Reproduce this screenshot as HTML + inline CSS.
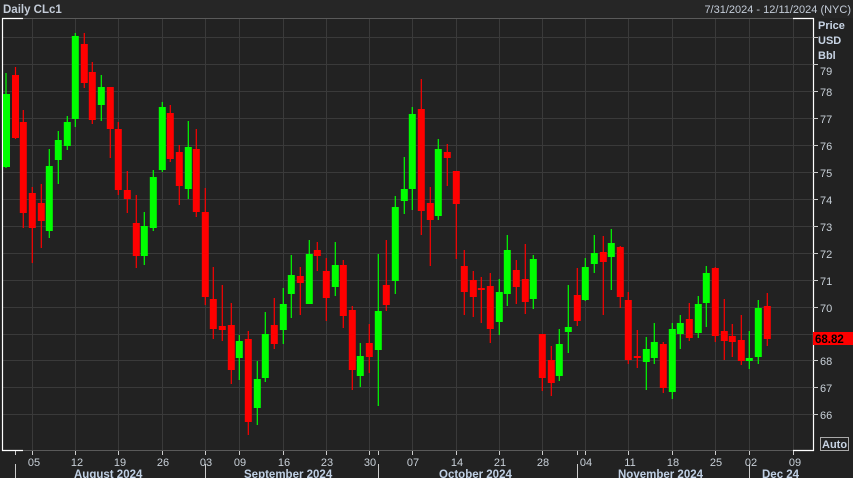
<!DOCTYPE html>
<html><head><meta charset="utf-8"><style>
html,body{margin:0;padding:0;background:#222222;}
body{width:853px;height:478px;overflow:hidden;position:relative;font-family:"Liberation Sans",Arial,sans-serif;}
svg{position:absolute;left:0;top:0;}
</style></head><body>
<svg width="853" height="478" viewBox="0 0 853 478" xmlns="http://www.w3.org/2000/svg">
<rect x="0" y="0" width="853" height="478" fill="#222222"/>
<rect x="0" y="0" width="853" height="18" fill="#262626"/>
<text x="3" y="13" font-size="11.5" font-weight="bold" fill="#c4ccd8" font-family="Liberation Sans, sans-serif">Daily CLc1</text>
<text x="851" y="13" font-size="11" fill="#c4ccd8" text-anchor="end" font-family="Liberation Sans, sans-serif">7/31/2024 - 12/11/2024 (NYC)</text>
<!-- grid -->
<g stroke="#3a3a3a" stroke-width="1">
<path d="M2 37.5H813M2 64.5H813M2 91.5H813M2 118.5H813M2 145.5H813M2 172.5H813M2 199.5H813M2 226.5H813M2 253.5H813M2 280.5H813M2 307.5H813M2 334.5H813M2 360.5H813M2 387.5H813M2 414.5H813"/>
<path d="M32.5 18V450M75.5 18V450M118.5 18V450M162.5 18V450M205.5 18V450M239.5 18V450M283.5 18V450M326.5 18V450M369.5 18V450M412.5 18V450M456.5 18V450M499.5 18V450M542.5 18V450M585.5 18V450M628.5 18V450M672.5 18V450M715.5 18V450M749.5 18V450M793.5 18V450"/>
</g>
<path d="M2 18.5H813M2 450.5H813" stroke="#5a5a5a" stroke-width="1"/>
<path d="M2.5 18V451M2 18.5H23M2 450.5H23M813.5 18V451M793 18.5H814M793 450.5H814" stroke="#ffffff" stroke-width="1.2" fill="none"/>
<!-- right axis ticks -->
<path d="M813 37.5H818M813 64.5H818M813 91.5H818M813 118.5H818M813 145.5H818M813 172.5H818M813 199.5H818M813 226.5H818M813 253.5H818M813 280.5H818M813 307.5H818M813 334.5H818M813 360.5H818M813 387.5H818M813 414.5H818" stroke="#cccccc" stroke-width="1"/>
<g font-size="11" fill="#c8d0d8" font-family="Liberation Sans, sans-serif">
<text x="818" y="29" font-weight="bold" fill="#c8d4e4">Price</text>
<text x="818" y="44" font-weight="bold" fill="#c8d4e4">USD</text>
<text x="818" y="59" font-weight="bold" fill="#c8d4e4">Bbl</text>
<text x="820" y="75">79</text><text x="820" y="96">78</text><text x="820" y="123">77</text><text x="820" y="150">76</text><text x="820" y="177">75</text><text x="820" y="204">74</text><text x="820" y="231">73</text><text x="820" y="258">72</text><text x="820" y="285">71</text><text x="820" y="312">70</text><text x="820" y="365">68</text><text x="820" y="392">67</text><text x="820" y="419">66</text>
</g>
<rect x="813" y="332" width="40" height="13" fill="#ff0000"/>
<text x="815" y="343" font-size="11.5" font-weight="bold" fill="#000" font-family="Liberation Sans, sans-serif">68.82</text>
<rect x="820.5" y="437.5" width="28" height="13" fill="none" stroke="#aaaaaa"/>
<text x="822" y="448" font-size="11" font-weight="bold" fill="#c8d4e4" font-family="Liberation Sans, sans-serif">Auto</text>
<!-- bottom axis -->
<path d="M15.5 451V455M32.5 451V455M75.5 451V455M118.5 451V455M162.5 451V455M205.5 451V455M239.5 451V455M283.5 451V455M326.5 451V455M369.5 451V455M378.5 451V455M412.5 451V455M456.5 451V455M499.5 451V455M542.5 451V455M577.5 451V455M585.5 451V455M628.5 451V455M672.5 451V455M715.5 451V455M749.5 451V455M793.5 451V455" stroke="#cccccc"/>
<path d="M15.5 464V478M205.5 464V478M378.5 464V478M577.5 464V478M749.5 464V478" stroke="#cccccc"/>
<g font-size="11" fill="#c8d0d8" text-anchor="middle" font-family="Liberation Sans, sans-serif">
<text x="34" y="466">05</text><text x="77" y="466">12</text><text x="120" y="466">19</text><text x="163" y="466">26</text><text x="206" y="466">03</text><text x="240" y="466">09</text><text x="284" y="466">16</text><text x="327" y="466">23</text><text x="370" y="466">30</text><text x="413" y="466">07</text><text x="457" y="466">14</text><text x="500" y="466">21</text><text x="543" y="466">28</text><text x="586" y="466">04</text><text x="630" y="466">11</text><text x="673" y="466">18</text><text x="716" y="466">25</text><text x="751" y="466">02</text><text x="795" y="466">09</text>
</g>
<g font-size="11.5" font-weight="bold" fill="#c0d0e4" font-family="Liberation Sans, sans-serif">
<text x="74" y="478">August 2024</text><text x="244" y="478">September 2024</text><text x="439" y="478">October 2024</text><text x="618" y="478">November 2024</text><text x="762" y="478">Dec 24</text>
</g>
<!-- green candles -->
<g fill="#00ff00" stroke="#00ff00">
<path fill="none" stroke-width="1.2" d="M6 73V168M49.3 149V238M58.3 131V184M67.3 116V150M75.3 33V127M101.3 75V121M144.3 212V265M153.3 170V231M162.3 102V172M188.3 121V199M239.3 335V380M257.3 361V425M265.3 312V382M283.3 288V344M291.3 255V318M309.3 240V304M335.3 242V296M360.3 343V387M378.3 254V406M395.3 196V294M404.3 157V214M412.3 107V210M438.3 139V220M499.3 279V335M507.3 235V306M533.3 255V309M559.3 329V381M568.3 285V353M585.3 258V301M594.3 235V273M611.3 229V290M646.3 337V390M654.3 323V364M672.3 323V399M680.3 315V349M698.3 296V338M706.3 266V327M749.3 331V369M758.3 300V364"/>
<g stroke="none">
<rect x="3" y="94" width="7" height="73"/><rect x="45.8" y="166" width="7" height="65"/><rect x="54.8" y="140" width="7" height="20"/><rect x="63.8" y="122" width="7" height="24"/><rect x="71.8" y="36" width="7" height="83"/><rect x="97.8" y="87" width="7" height="18"/><rect x="140.8" y="226" width="7" height="30"/><rect x="149.8" y="177" width="7" height="51"/><rect x="158.8" y="107" width="7" height="63"/><rect x="184.8" y="147" width="7" height="42"/><rect x="235.8" y="341" width="7" height="17"/><rect x="253.8" y="379" width="7" height="29"/><rect x="261.8" y="334" width="7" height="44"/><rect x="279.8" y="304" width="7" height="26"/><rect x="287.8" y="275" width="7" height="19"/><rect x="305.8" y="254" width="7" height="50"/><rect x="331.8" y="265" width="7" height="22"/><rect x="356.8" y="356" width="7" height="20"/><rect x="374.8" y="311" width="7" height="39"/><rect x="391.8" y="207" width="7" height="74"/><rect x="400.8" y="189" width="7" height="12"/><rect x="408.8" y="114" width="7" height="75"/><rect x="434.8" y="149" width="7" height="67"/><rect x="495.8" y="292" width="7" height="30"/><rect x="503.8" y="250" width="7" height="44"/><rect x="529.8" y="259" width="7" height="40"/><rect x="555.8" y="344" width="7" height="32"/><rect x="564.8" y="327" width="7" height="5"/><rect x="581.8" y="267" width="7" height="33"/><rect x="590.8" y="253" width="7" height="11"/><rect x="607.8" y="243" width="7" height="14"/><rect x="642.8" y="349" width="7" height="13"/><rect x="650.8" y="342" width="7" height="16"/><rect x="668.8" y="329" width="7" height="63"/><rect x="676.8" y="323" width="7" height="11"/><rect x="694.8" y="304" width="7" height="29"/><rect x="702.8" y="273" width="7" height="30"/><rect x="745.8" y="358" width="7" height="3"/><rect x="754.8" y="308" width="7" height="49"/>
</g></g>
<!-- red candles -->
<g fill="#ff0000" stroke="#ff0000">
<path fill="none" stroke-width="1.2" d="M15.5 67V139M23.3 110V228M32.3 187V263M41.3 184V248M84.3 33V88M92.3 62V124M110.3 87V158M118.3 122V195M127.3 171V213M136.3 195V268M170.3 105V162M179.3 145V205M196.3 129V217M205.3 188V305M213.3 267V339M222.3 285V341M231.3 303V384M248.3 331V435M274.3 298V349M300.3 267V315M317.3 242V271M326.3 258V321M343.3 260V328M352.3 306V390M369.3 324V373M386.3 240V311M421.3 79V235M430.3 187V266M447.3 144V186M456.3 171V259M464.3 250V315M473.3 271V317M481.3 277V323M490.3 273V343M516.3 260V304M525.3 244V314M542.3 334V391M551.3 346V396M577.3 268V326M603.3 236V315M620.3 246V308M628.3 292V364M637.3 330V368M663.3 342V393M689.3 303V341M715.3 267V342M724.3 299V360M732.3 324V357M741.3 315V365M767.3 293V346"/>
<g stroke="none">
<rect x="12" y="75" width="7" height="63"/><rect x="19.8" y="122" width="7" height="91"/><rect x="28.8" y="193" width="7" height="35"/><rect x="37.8" y="203" width="7" height="18"/><rect x="80.8" y="44" width="7" height="39"/><rect x="88.8" y="72" width="7" height="48"/><rect x="106.8" y="87" width="7" height="42"/><rect x="114.8" y="129" width="7" height="61"/><rect x="123.8" y="190" width="7" height="9"/><rect x="132.8" y="223" width="7" height="33"/><rect x="166.8" y="113" width="7" height="46"/><rect x="175.8" y="152" width="7" height="34"/><rect x="192.8" y="149" width="7" height="63"/><rect x="201.8" y="212" width="7" height="85"/><rect x="209.8" y="299" width="7" height="30"/><rect x="218.8" y="326" width="7" height="4"/><rect x="227.8" y="325" width="7" height="45"/><rect x="244.8" y="339" width="7" height="83"/><rect x="270.8" y="325" width="7" height="19"/><rect x="296.8" y="276" width="7" height="7"/><rect x="313.8" y="250" width="7" height="6"/><rect x="322.8" y="271" width="7" height="27"/><rect x="339.8" y="265" width="7" height="51"/><rect x="348.8" y="310" width="7" height="60"/><rect x="365.8" y="343" width="7" height="14"/><rect x="382.8" y="285" width="7" height="20"/><rect x="417.8" y="109" width="7" height="102"/><rect x="426.8" y="203" width="7" height="17"/><rect x="443.8" y="152" width="7" height="6"/><rect x="452.8" y="171" width="7" height="33"/><rect x="460.8" y="266" width="7" height="26"/><rect x="469.8" y="280" width="7" height="17"/><rect x="477.8" y="288" width="7" height="2"/><rect x="486.8" y="286" width="7" height="43"/><rect x="512.8" y="270" width="7" height="17"/><rect x="521.8" y="279" width="7" height="23"/><rect x="538.8" y="334" width="7" height="44"/><rect x="547.8" y="360" width="7" height="23"/><rect x="573.8" y="295" width="7" height="26"/><rect x="599.8" y="252" width="7" height="10"/><rect x="616.8" y="247" width="7" height="50"/><rect x="624.8" y="300" width="7" height="60"/><rect x="633.8" y="356" width="7" height="2"/><rect x="659.8" y="344" width="7" height="44"/><rect x="685.8" y="319" width="7" height="19"/><rect x="711.8" y="268" width="7" height="68"/><rect x="720.8" y="331" width="7" height="10"/><rect x="728.8" y="336" width="7" height="6"/><rect x="737.8" y="340" width="7" height="21"/><rect x="763.8" y="306" width="7" height="33"/>
</g></g>
</svg>
</body></html>
